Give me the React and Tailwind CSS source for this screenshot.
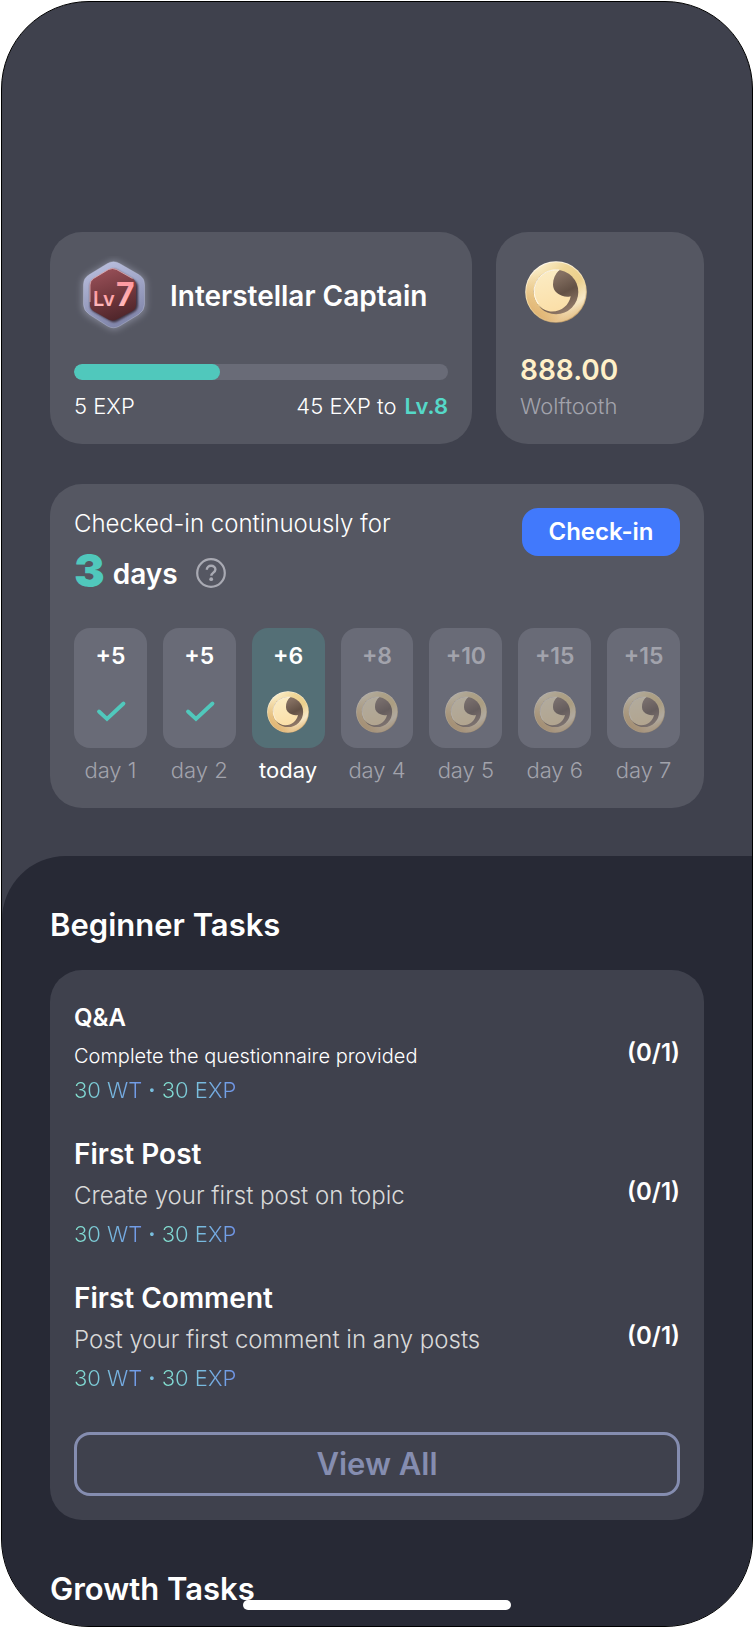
import { useId } from "react";

const days = [
  { label: "day 1", bonus: "+5", state: "done" },
  { label: "day 2", bonus: "+5", state: "done" },
  { label: "today", bonus: "+6", state: "today" },
  { label: "day 4", bonus: "+8", state: "upcoming" },
  { label: "day 5", bonus: "+10", state: "upcoming" },
  { label: "day 6", bonus: "+15", state: "upcoming" },
  { label: "day 7", bonus: "+15", state: "upcoming" },
];

const tasks = [
  { title: "Q&A", text: "Complete the questionnaire provided", compact: true },
  { title: "First Post", text: "Create your first post on topic" },
  { title: "First Comment", text: "Post your first comment in any posts" },
];

function Coin({ className }) {
  const id = useId();
  return (
    <svg viewBox="0 0 62 62" className={className} aria-hidden="true">
      <defs>
        <linearGradient id={`${id}rim`} x1="0.1" y1="0.15" x2="0.8" y2="0.95">
          <stop offset="0" stopColor="#fbeecb" />
          <stop offset="0.3" stopColor="#efd697" />
          <stop offset="0.6" stopColor="#ecd08c" />
          <stop offset="0.85" stopColor="#f7e8c8" />
          <stop offset="1" stopColor="#e6c690" />
        </linearGradient>
        <linearGradient id={`${id}side`} x1="0.1" y1="0.9" x2="0.5" y2="0.35">
          <stop offset="0" stopColor="#dfb070" />
          <stop offset="1" stopColor="#e8c488" stopOpacity="0" />
        </linearGradient>
        <linearGradient id={`${id}edge`} x1="0.3" y1="0" x2="0.7" y2="1">
          <stop offset="0" stopColor="#fffaf0" />
          <stop offset="0.5" stopColor="#f3dca6" />
          <stop offset="1" stopColor="#c09a66" />
        </linearGradient>
        <linearGradient id={`${id}well`} x1="0.4" y1="0.2" x2="0.8" y2="1">
          <stop offset="0" stopColor="#857062" />
          <stop offset="0.45" stopColor="#635145" />
          <stop offset="1" stopColor="#9b8270" />
        </linearGradient>
        <linearGradient id={`${id}moon`} x1="0.3" y1="0" x2="0.5" y2="1">
          <stop offset="0" stopColor="#fbecc4" />
          <stop offset="1" stopColor="#fbdfa8" />
        </linearGradient>
      </defs>
      <circle cx="31" cy="31" r="30.800" fill={`url(#${id}edge)`} />
      <circle cx="31" cy="31" r="29.800" fill={`url(#${id}rim)`} />
      <circle cx="31" cy="31" r="29.800" fill={`url(#${id}side)`} />
      <circle cx="31" cy="31" r="22.300" fill={`url(#${id}well)`} />
      <path
        d="M8.700 31A22.300 22.300 0 0 0 17 48.400C13 44 10.500 38 9.500 31Z"
        fill="#f0cf92"
      />
      <path
        d="M34.300 9A22.200 22.200 0 0 0 9.200 28C7.600 41 17 50.500 27 50.500C37 50.500 44 44 45.700 35.300C43 36.200 40 36 37 34.800C31 32.500 28 28.500 28 23.500C28 18 30 13 34.300 9Z"
        fill={`url(#${id}moon)`}
      />
      <path
        d="M34.300 9A22.200 22.200 0 0 0 9.200 28C8.800 34 10.500 39 13.500 43"
        fill="none"
        stroke="#fffaf0"
        strokeWidth="0.9"
      />
    </svg>
  );
}

function LevelBadge() {
  return (
    <svg viewBox="0 0 80 80" className="size-20 shrink-0" role="img" aria-label="Level 7">
      <defs>
        <linearGradient id="badgeRim" x1="0.3" y1="0" x2="0.6" y2="1">
          <stop offset="0" stopColor="#b9bedd" />
          <stop offset="1" stopColor="#7e83a8" />
        </linearGradient>
        <linearGradient id="badgeCore" x1="0.3" y1="0" x2="0.6" y2="1">
          <stop offset="0" stopColor="#985058" />
          <stop offset="0.5" stopColor="#74393f" />
          <stop offset="1" stopColor="#4e252a" />
        </linearGradient>
        <linearGradient id="badgeText" x1="0" y1="0" x2="0" y2="1">
          <stop offset="0" stopColor="#ff8f97" />
          <stop offset="1" stopColor="#ffc4c6" />
        </linearGradient>
        <filter id="badgeGlow" x="-30%" y="-30%" width="160%" height="160%">
          <feGaussianBlur stdDeviation="3.500" />
        </filter>
        <filter id="coreShadow" x="-20%" y="-20%" width="140%" height="140%">
          <feGaussianBlur stdDeviation="0.900" />
        </filter>
      </defs>
      <path
        d="M35 6Q40 3 45 6L66 18.500Q72 22 72 28V50Q72 56 66 60L45 72Q40 75.500 35 72L14 60Q8 56 8 50V28Q8 22 14 18.500Z"
        fill="#b4b7cc"
        opacity="0.5"
        filter="url(#badgeGlow)"
      />
      <path
        d="M33.500 7.500Q39.500 4 45.500 7.500L64.500 18.500Q70.500 22 70.500 28.500V48.500Q70.500 54.500 64.500 58.500L45.500 70Q39.500 73.500 33.500 70L15.500 58.500Q9.500 54.500 9.500 48.500V28.500Q9.500 22 15.500 18.500Z"
        fill="url(#badgeRim)"
        stroke="#c5c9e4"
        strokeOpacity="0.6"
        strokeWidth="0.6"
      />
      <path
        d="M36 14.500Q40 12 44 14.500L60 24Q64 26.500 64 31V49Q64 53.500 60 56L44 65Q40 67.500 36 65L20 56Q16 53.500 16 49V31Q16 26.500 20 24Z"
        fill="#3d3040"
        filter="url(#coreShadow)"
      />
      <path
        d="M34.500 13.500Q38.500 11.500 42.500 13.500L58.500 22.500Q62 25 62 29V48.500Q62 52.500 58.500 55L42.500 63.500Q38.500 65.500 34.500 63.500L19.500 55Q16 52.500 16 48.500V29Q16 25 19.500 22.500Z"
        fill="url(#badgeCore)"
      />
      <path
        d="M16 46V29Q16 25 19.500 22.500L34.500 13.500Q38.500 11.500 42.500 13.500L58.500 22.500"
        fill="none"
        stroke="#e3aeb4"
        strokeWidth="0.8"
      />
      <g fill="url(#badgeText)" fontFamily="Inter, sans-serif">
        <text x="19" y="50" fontSize="20" fontWeight="600">Lv</text>
        <text x="42" y="50" fontSize="32" fontWeight="700">7</text>
      </g>
    </svg>
  );
}

function CheckMark() {
  return (
    <svg viewBox="0 0 42 42" className="size-[42px]" aria-hidden="true">
      <path
        d="M10 20.500L18 28L34.500 12.500"
        fill="none"
        stroke="#50c8bc"
        strokeWidth="3.800"
        strokeLinecap="round"
        strokeLinejoin="miter"
      />
    </svg>
  );
}

function Day({ label, bonus, state }) {
  const upcoming = state === "upcoming";
  const today = state === "today";
  return (
    <li className="flex flex-col items-center">
      <div
        className={`flex h-[120px] w-full flex-col items-center justify-between rounded-2xl pt-3 pb-[15px] ${
          today ? "bg-[#546f76]" : "bg-[#696b77]"
        }`}
      >
        <span
          className={`text-[23px] leading-8 font-semibold ${upcoming ? "text-[#a2a3ac]" : "text-white"}`}
        >
          {bonus}
        </span>
        {state === "done" ? (
          <CheckMark />
        ) : (
          <Coin className={upcoming ? "size-[42px] opacity-50" : "size-[42px]"} />
        )}
      </div>
      <span
        className={`mt-2 text-[22px] leading-7 whitespace-nowrap ${today ? "text-white" : "font-[350] text-[#a2a3ac]"}`}
      >
        {label}
      </span>
    </li>
  );
}

const gradientText = "bg-linear-to-r from-[#84e4cf] to-[#7094e8] bg-clip-text text-transparent";

function Task({ title, text, compact }) {
  return (
    <li className="flex items-center justify-between gap-4">
      <div>
        <h3 className={compact ? "text-2xl leading-8 font-semibold" : "text-[28px] leading-9 font-semibold"}>
          {title}
        </h3>
        <p
          className={
            compact
              ? "mt-2 text-xl leading-7 font-[350]"
              : "mt-2 text-2xl leading-8 font-[350] text-[#d9d9d9]"
          }
        >
          {text}
        </p>
        <p className={`flex gap-1.5 text-[22px] leading-7 font-[350] ${compact ? "mt-1.5" : "mt-2"}`}>
          <span className={gradientText}>30 WT</span>
          <span className={`font-bold ${gradientText}`}>·</span>
          <span className={gradientText}>30 EXP</span>
        </p>
      </div>
      <span className="text-2xl leading-8 font-semibold">(0/1)</span>
    </li>
  );
}

export default function App() {
  return (
    <div className="flex min-h-screen flex-col bg-white pt-px pl-px font-['Inter',sans-serif] text-white">
      <main className="relative flex flex-1 flex-col overflow-hidden rounded-[88px] border border-black bg-[#3f414d]">
        <div className="flex flex-col gap-10 px-12 pt-[230px] pb-12">
          <div className="flex gap-6">
            <section className="flex-1 rounded-4xl bg-[#555762] p-6">
              <div className="flex items-center gap-4">
                <LevelBadge />
                <h1 className="text-[28px] leading-9 font-semibold whitespace-nowrap">Interstellar Captain</h1>
              </div>
              <div
                className="mt-7 h-4 overflow-hidden rounded-full bg-[#696b77]"
                role="progressbar"
                aria-label="Experience"
                aria-valuenow={39}
                aria-valuemin={0}
                aria-valuemax={100}
              >
                <div className="h-full w-[39%] rounded-full bg-[#50c8bc]" />
              </div>
              <div className="mt-3 flex justify-between text-[22px] leading-7 font-[350]">
                <span>5 EXP</span>
                <span className="flex gap-2">
                  45 EXP to <strong className="font-semibold text-[#55d8c8]">Lv.8</strong>
                </span>
              </div>
            </section>
            <section className="w-52 rounded-4xl bg-[#555762] p-6">
              <div className="flex size-18 items-center justify-center">
                <Coin className="size-[62px]" />
              </div>
              <p className="mt-6 text-[28px] leading-9 font-semibold text-[#fff0c8]">888.00</p>
              <p className="mt-1 text-[22px] leading-7 font-[350] text-[#a2a3ac]">Wolftooth</p>
            </section>
          </div>

          <section className="rounded-4xl bg-[#555762] p-6">
            <div className="flex items-start justify-between">
              <div>
                <p className="text-2xl leading-8 font-[350]">Checked-in continuously for</p>
                <div className="flex h-[60px] items-center gap-[18px]">
                  <p className="flex items-center gap-2 font-semibold">
                    <span className="text-[46px] leading-[58px] font-black text-[#50c8bc]">3</span>
                    <span className="pt-2 text-[28px] leading-9">days</span>
                  </p>
                  <button type="button" aria-label="About check-in" className="pt-1.5">
                    <svg viewBox="0 0 30 30" className="size-[30px]" fill="none" stroke="#a9aab3" aria-hidden="true">
                      <circle cx="15" cy="15" r="13.800" strokeWidth="2.200" />
                      <path
                        d="M10.800 11.800C10.800 9.300 12.700 7.700 15.100 7.700C17.600 7.700 19.400 9.300 19.400 11.500C19.400 14.600 15.300 14.700 15.300 17.800"
                        strokeWidth="2.400"
                      />
                      <circle cx="15.200" cy="21.200" r="1.900" fill="#a9aab3" stroke="none" />
                    </svg>
                  </button>
                </div>
              </div>
              <button
                type="button"
                className="h-12 w-[158px] rounded-2xl bg-[#4179fc] text-2xl leading-8 font-semibold"
              >
                Check-in
              </button>
            </div>
            <ul className="mt-7 grid grid-cols-7 gap-4">
              {days.map((day) => (
                <Day key={day.label} {...day} />
              ))}
            </ul>
          </section>
        </div>

        <div className="flex-1 rounded-tl-[64px] bg-[#272935] px-12 pt-12 pb-3">
          <h2 className="text-[31px] leading-[42px] font-semibold">Beginner Tasks</h2>
          <section className="mt-6 rounded-4xl bg-[#3f414d] px-6 pt-8 pb-6">
            <ul className="flex flex-col gap-8">
              {tasks.map((task) => (
                <Task key={task.title} {...task} />
              ))}
            </ul>
            <button
              type="button"
              className="mt-10 h-16 w-full rounded-2xl border-3 border-[#858db0] text-[31px] leading-10 font-semibold text-[#858db0]"
            >
              View All
            </button>
          </section>
          <h2 className="mt-12 text-[31px] leading-[42px] font-semibold">Growth Tasks</h2>
        </div>

        <div className="absolute bottom-4 left-1/2 h-2.5 w-[268px] -translate-x-1/2 rounded-full bg-white" />
      </main>
    </div>
  );
}
